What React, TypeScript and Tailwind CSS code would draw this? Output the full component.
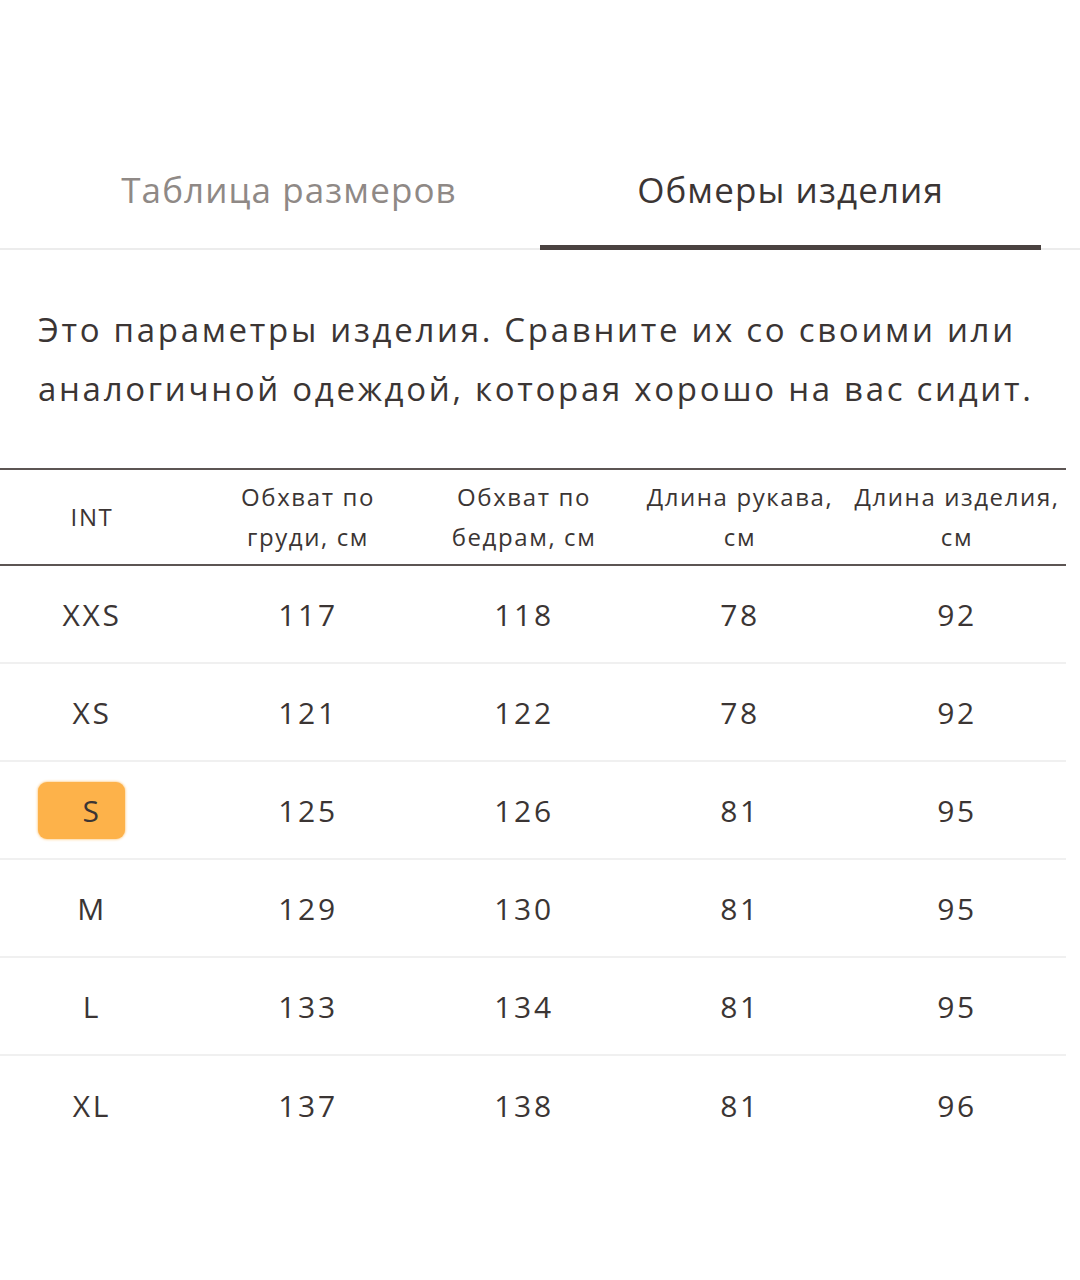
const rows = [
  ["XXS", "117", "118", "78", "92"],
  ["XS", "121", "122", "78", "92"],
  ["S", "125", "126", "81", "95"],
  ["M", "129", "130", "81", "95"],
  ["L", "133", "134", "81", "95"],
  ["XL", "137", "138", "81", "96"],
];

const App: React.FC = () => {
  return (
    <div className="w-[1080px] h-[1280px] bg-white text-[#3b3534]" style={{ fontFamily: '"Open Sans", sans-serif' }}>
      {/* tabs */}
      <div className="pt-[160px] border-b-2 border-[#ececec] flex">
        <div className="w-[540px] pl-[38px] pb-[28px] text-center text-[35px] leading-[60px] tracking-[1.1px] text-[#8f8986]">Таблица размеров</div>
        <div className="w-[501px] pb-[23px] text-center text-[35px] leading-[60px] tracking-[1.1px] border-b-[5px] border-[#4a4240] -mb-[2px]">Обмеры изделия</div>
      </div>

      {/* description */}
      <p className="px-[38px] pt-[50px] text-[33px] leading-[59px] tracking-[2.7px]">
        Это параметры изделия. Сравните их со своими или аналогичной одеждой, которая хорошо на вас сидит.
      </p>

      {/* table */}
      <div className="mt-[50px] w-[1066px] border-t-2 border-[#5c5553]">
        <div className="grid grid-cols-[200px_216px_216px_216px_218px] h-[96px] items-center border-b-2 border-[#5c5553] text-[24px] leading-[40px] tracking-[1.6px] text-center">
          <div className="pr-4">INT</div>
          <div>Обхват по<br />груди, см</div>
          <div>Обхват по<br />бедрам, см</div>
          <div className="whitespace-nowrap">Длина рукава,<br />см</div>
          <div className="whitespace-nowrap">Длина изделия,<br />см</div>
        </div>
        {rows.map((r, i) => (
          <div
            key={r[0]}
            className={`grid grid-cols-[200px_216px_216px_216px_218px] h-[98px] items-center text-center text-[30px] tracking-[2.7px] ${i < rows.length - 1 ? "border-b-2 border-[#f0f0f0]" : ""}`}
          >
            <div className="pr-4 flex justify-center">
              {r[0] === "S" ? (
                <span className="ml-[-22px] pl-[22px] w-[87px] h-[57px] bg-[#fdb24a] rounded-[9px] shadow-[0_0_3px_#fdb24a] flex items-center justify-center">S</span>
              ) : (
                r[0]
              )}
            </div>
            <div>{r[1]}</div>
            <div>{r[2]}</div>
            <div>{r[3]}</div>
            <div>{r[4]}</div>
          </div>
        ))}
      </div>
    </div>
  );
};

export default App;
